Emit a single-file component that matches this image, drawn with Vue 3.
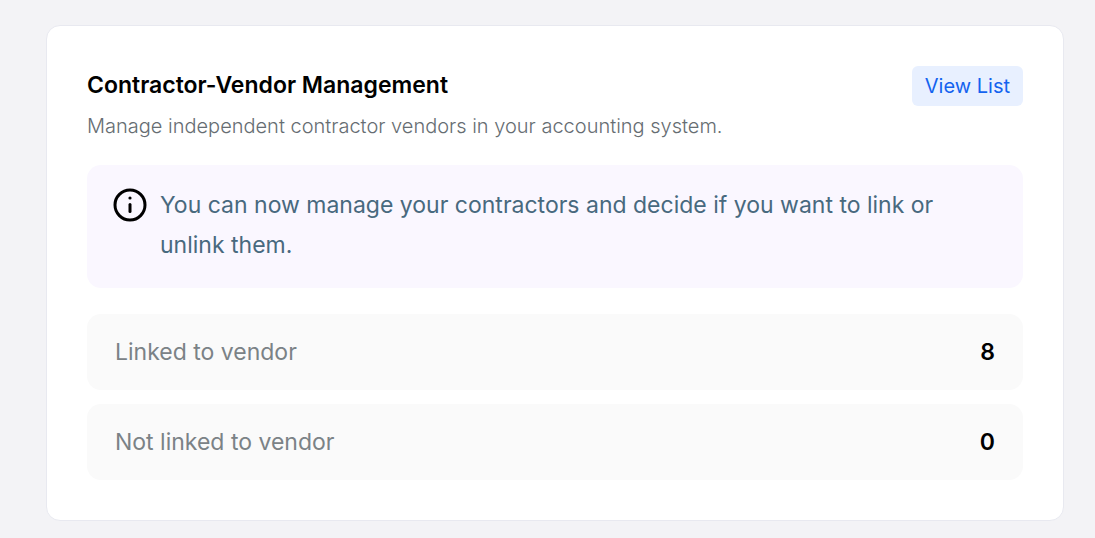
<template>
  <main class="page">
    <section class="card">
      <header class="card-head">
        <h2 class="card-title">Contractor-Vendor Management</h2>
        <button type="button" class="view-button">View List</button>
      </header>
      <p class="card-desc">Manage independent contractor vendors in your accounting system.</p>

      <div class="notice">
        <svg class="notice-icon" viewBox="0 0 34 34" fill="none" aria-hidden="true">
          <circle cx="17" cy="17" r="15" stroke="#000" stroke-width="3" />
          <circle cx="17" cy="10" r="1.6" fill="#000" />
          <path d="M17 16.5v7" stroke="#000" stroke-width="3" stroke-linecap="round" />
        </svg>
        <p class="notice-text">You can now manage your contractors and decide if you want to link or unlink them.</p>
      </div>

      <dl class="stats">
        <div v-for="stat in stats" :key="stat.label" class="stat">
          <dt class="stat-label">{{ stat.label }}</dt>
          <dd class="stat-value">{{ stat.value }}</dd>
        </div>
      </dl>
    </section>
  </main>
</template>

<script setup>
const stats = [
  { label: 'Linked to vendor', value: 8 },
  { label: 'Not linked to vendor', value: 0 },
]
</script>

<style>
body {
  background: #f3f3f6;
}
</style>

<style scoped>
.page {
  padding: 25px 31px 17px 46px;
  font-family: Inter, 'Liberation Sans', sans-serif;
}

.card {
  padding: 40px;
  border: 1px solid #e8e9f0;
  border-radius: 14px;
  background: #fff;
}

.card-head {
  display: flex;
  align-items: flex-start;
  justify-content: space-between;
}

.card-title {
  margin: 0;
  color: #000;
  font-size: 23px;
  font-weight: 600;
  line-height: 38px;
}

.view-button {
  height: 40px;
  padding: 0 13px;
  border: 0;
  border-radius: 6px;
  background: #e8f0ff;
  color: #1463ef;
  font-family: inherit;
  font-size: 20px;
  font-weight: 400;
  cursor: pointer;
}

.card-desc {
  margin: 6px 0 24px;
  color: #666d72;
  font-size: 20px;
  font-weight: 300;
  line-height: 29px;
}

.notice {
  display: flex;
  gap: 13px;
  padding: 20px 60px 23px 26px;
  border-radius: 14px;
  background: #faf7ff;
}

.notice-icon {
  flex: none;
  width: 34px;
  height: 40px;
}

.notice-text {
  margin: 0;
  color: #48697e;
  font-size: 23px;
  line-height: 40px;
}

.stats {
  display: grid;
  gap: 14px;
  margin: 26px 0 0;
}

.stat {
  display: flex;
  align-items: center;
  justify-content: space-between;
  padding: 18px 28px;
  border-radius: 14px;
  background: #fafafa;
  font-size: 23px;
  line-height: 40px;
}

.stat-label {
  color: #7b8286;
}

.stat-value {
  margin: 0;
  color: #000;
  font-weight: 600;
}
</style>
